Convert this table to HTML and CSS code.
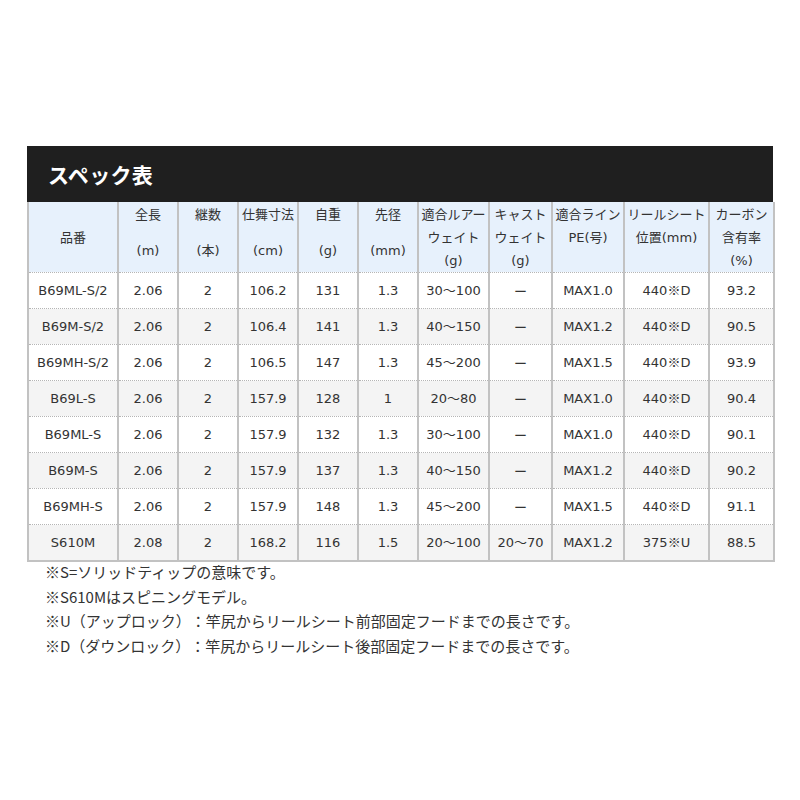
FILE: index.html
```html
<!DOCTYPE html>
<html lang="ja">
<head>
<meta charset="utf-8">
<title>スペック表</title>
<link rel="stylesheet" href="styles.css">
</head>
<body>
<div class="page">
  <h2 class="title">スペック表</h2>
  <table class="spec">
    <colgroup>
      <col class="c90"><col class="c60"><col class="c60"><col class="c60"><col class="c60"><col class="c60"><col class="c71"><col class="c63"><col class="c72"><col class="c85"><col class="c65">
    </colgroup>
    <thead>
      <tr>
        <th class="one">品番</th>
        <th class="two"><div>全長</div><div class="l2">(m)</div></th>
        <th class="two"><div>継数</div><div class="l2">(本)</div></th>
        <th class="two"><div>仕舞寸法</div><div class="l2">(cm)</div></th>
        <th class="two"><div>自重</div><div class="l2">(g)</div></th>
        <th class="two"><div>先径</div><div class="l2">(mm)</div></th>
        <th class="three"><div>適合ルアー</div><div>ウェイト</div><div>(g)</div></th>
        <th class="three"><div>キャスト</div><div>ウェイト</div><div>(g)</div></th>
        <th class="three"><div>適合ライン</div><div>PE(号)</div></th>
        <th class="three"><div>リールシート</div><div>位置(mm)</div></th>
        <th class="three"><div>カーボン</div><div>含有率</div><div>(%)</div></th>
      </tr>
    </thead>
    <tbody>
      <tr><td>B69ML-S/2</td><td>2.06</td><td>2</td><td>106.2</td><td>131</td><td>1.3</td><td>30<span class="j">～</span>100</td><td class="j">ー</td><td>MAX1.0</td><td>440<span class="j">※</span>D</td><td>93.2</td></tr>
      <tr><td>B69M-S/2</td><td>2.06</td><td>2</td><td>106.4</td><td>141</td><td>1.3</td><td>40<span class="j">～</span>150</td><td class="j">ー</td><td>MAX1.2</td><td>440<span class="j">※</span>D</td><td>90.5</td></tr>
      <tr><td>B69MH-S/2</td><td>2.06</td><td>2</td><td>106.5</td><td>147</td><td>1.3</td><td>45<span class="j">～</span>200</td><td class="j">ー</td><td>MAX1.5</td><td>440<span class="j">※</span>D</td><td>93.9</td></tr>
      <tr><td>B69L-S</td><td>2.06</td><td>2</td><td>157.9</td><td>128</td><td>1</td><td>20<span class="j">～</span>80</td><td class="j">ー</td><td>MAX1.0</td><td>440<span class="j">※</span>D</td><td>90.4</td></tr>
      <tr><td>B69ML-S</td><td>2.06</td><td>2</td><td>157.9</td><td>132</td><td>1.3</td><td>30<span class="j">～</span>100</td><td class="j">ー</td><td>MAX1.0</td><td>440<span class="j">※</span>D</td><td>90.1</td></tr>
      <tr><td>B69M-S</td><td>2.06</td><td>2</td><td>157.9</td><td>137</td><td>1.3</td><td>40<span class="j">～</span>150</td><td class="j">ー</td><td>MAX1.2</td><td>440<span class="j">※</span>D</td><td>90.2</td></tr>
      <tr><td>B69MH-S</td><td>2.06</td><td>2</td><td>157.9</td><td>148</td><td>1.3</td><td>45<span class="j">～</span>200</td><td class="j">ー</td><td>MAX1.5</td><td>440<span class="j">※</span>D</td><td>91.1</td></tr>
      <tr><td>S610M</td><td>2.08</td><td>2</td><td>168.2</td><td>116</td><td>1.5</td><td>20<span class="j">～</span>100</td><td>20<span class="j">～</span>70</td><td>MAX1.2</td><td>375<span class="j">※</span>U</td><td>88.5</td></tr>
    </tbody>
  </table>
  <div class="notes">
    <p>※S=ソリッドティップの意味です。</p>
    <p>※S610Mはスピニングモデル。</p>
    <p>※U（アップロック）：竿尻からリールシート前部固定フードまでの長さです。</p>
    <p>※D（ダウンロック）：竿尻からリールシート後部固定フードまでの長さです。</p>
  </div>
</div>
</body>
</html>
```

FILE: styles.css
```css
html, body {
  margin: 0;
  padding: 0;
  background: #ffffff;
}
body {
  font-family: "DejaVu Sans", "Noto Sans CJK JP", sans-serif;
  color: #333333;
}
.j {
  font-family: "Noto Sans CJK JP", sans-serif;
}
.page {
  width: 746px;
  margin: 0 0 0 27px;
  padding-top: 146px;
}
.title {
  margin: 0;
  height: 56px;
  background: #1f1f1f;
  color: #ffffff;
  font-family: "Noto Sans CJK JP", sans-serif;
  font-weight: 700;
  font-size: 21px;
  line-height: 57px;
  padding-left: 21px;
  letter-spacing: 0.3px;
}
.spec {
  width: 746px;
  table-layout: fixed;
  border-collapse: collapse;
  font-size: 13px;
  text-align: center;
  border-left: 2px solid #c2c2c2;
  border-right: 2px solid #c2c2c2;
  border-bottom: 2px solid #c2c2c2;
}
.c90 { width: 90px; }
.c60 { width: 60px; }
.c71 { width: 71px; }
.c63 { width: 63px; }
.c72 { width: 72px; }
.c85 { width: 85px; }
.c65 { width: 65px; }
.spec th, .spec td {
  border-left: 2px solid #c2c2c2;
  border-right: 2px solid #c2c2c2;
  border-bottom: 1px dotted #b5b5b5;
  padding: 0;
  white-space: nowrap;
  overflow: hidden;
}
.spec th {
  background: #e7f1fc;
  font-weight: 400;
  height: 67px;
  line-height: 23px;
  vertical-align: top;
  padding-top: 1px;
}
.spec th.one {
  vertical-align: middle;
  padding-top: 0;
}
.spec th .l2 {
  margin-top: 13px;
}
.spec td {
  height: 35px;
  line-height: 20px;
  vertical-align: middle;
}
.spec tbody tr:nth-child(even) td {
  background: #f4f4f4;
}
.spec tbody tr:last-child td {
  border-bottom: 2px solid #c2c2c2;
}
.notes {
  margin-top: -2px;
  padding-left: 18px;
  font-size: 15px;
  line-height: 24.6px;
  font-family: "Noto Sans CJK JP", sans-serif;
  text-spacing-trim: space-all;
  color: #333333;
}
.notes p {
  margin: 0;
}
```
